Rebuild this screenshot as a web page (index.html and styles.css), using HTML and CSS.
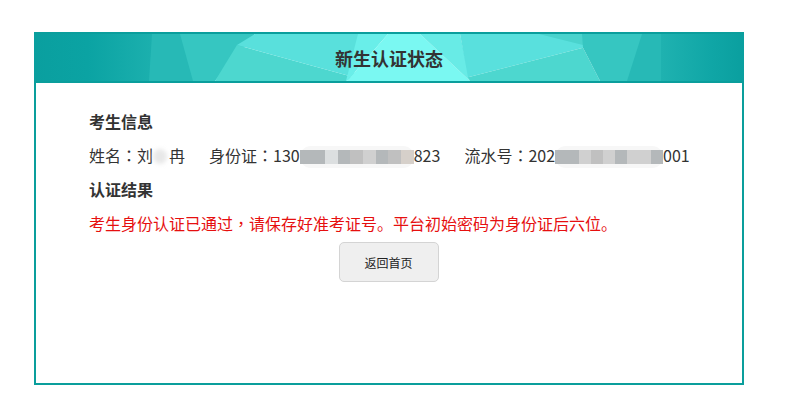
FILE: index.html
```html
<!DOCTYPE html>
<html lang="zh-CN">
<head>
<meta charset="utf-8">
<title>新生认证状态</title>
<link rel="stylesheet" href="styles.css">
</head>
<body>
<main class="card">
  <header class="banner">
    <svg class="banner-art" viewBox="0 0 710 51" preserveAspectRatio="none" aria-hidden="true">
      <defs>
        <linearGradient id="edgeL" x1="0" x2="1" y1="0" y2="0"><stop offset="0" stop-color="#0a9f9f"/><stop offset="0.45" stop-color="#0ba3a3"/><stop offset="1" stop-color="#1cb0ae"/></linearGradient>
        <linearGradient id="edgeR" x1="0" x2="1" y1="0" y2="0"><stop offset="0" stop-color="#1fb2b0"/><stop offset="0.6" stop-color="#10a6a6"/><stop offset="1" stop-color="#0a9f9f"/></linearGradient>
      </defs>
      <rect x="0" y="0" width="120" height="51" fill="url(#edgeL)"/>
      <polygon points="118,0 147,0 160,51 115,51" fill="#27b9b6"/>
      <polygon points="146,0 221,0 181,51 159,51" fill="#36c6c1"/>
      <polygon points="203,12 320,47 312,51 181,51" fill="#4dd7cf"/>
      <polygon points="221,0 325,0 320,47 203,12" fill="#59e0dc"/>
      <polygon points="324,0 354,0 313,51 312,51" fill="#69eee9"/>
      <polygon points="354,0 386,0 436,51 313,51" fill="#7af8f2"/>
      <polygon points="386,0 426,0 436,51" fill="#68ebe6"/>
      <polygon points="426,0 549,0 549,15 434,47" fill="#59e0dd"/>
      <polygon points="505,0 549,0 549,12" fill="#4ad3cd"/>
      <polygon points="434,47 549,15 566,51 436,51" fill="#4dd7cf"/>
      <polygon points="548,0 609,0 594,51 566,51 549,15" fill="#36c6c1"/>
      <polygon points="608,0 628,0 628,51 593,51" fill="#27b9b6"/>
      <rect x="627" y="0" width="83" height="51" fill="url(#edgeR)"/>
    </svg>
    <h1 class="banner-title">新生认证状态</h1>
  </header>
  <section class="content">
    <h2 class="section-title">考生信息</h2>
    <p class="info-row">
      <span class="field">姓名<span class="tc" lang="zh-TW">：</span>刘<span class="mask mask-name"><i class="blob"></i></span>冉</span>
      <span class="field">身份证<span class="tc" lang="zh-TW">：</span>130<span class="mask mask-id"><i class="px a"></i><i class="px a"></i><i class="px b"></i><i class="px a"></i><i class="px d"></i><i class="px c"></i><i class="px a"></i><i class="px d"></i><i class="px e"></i></span>823</span>
      <span class="field">流水号<span class="tc" lang="zh-TW">：</span>202<span class="mask mask-serial"><i class="px a"></i><i class="px a"></i><i class="px c"></i><i class="px d"></i><i class="px c"></i><i class="px a"></i><i class="px c"></i><i class="px c"></i><i class="px a"></i></span>001</span>
    </p>
    <h2 class="section-title">认证结果</h2>
    <p class="result">考生身份认证已通过<span class="tc" lang="zh-TW">，</span>请保存好准考证号。平台初始密码为身份证后六位。</p>
    <div class="actions"><a class="btn" href="#">返回首页</a></div>
  </section>
</main>
</body>
</html>
```

FILE: styles.css
```css
* { box-sizing: border-box; }
html, body { margin: 0; padding: 0; background: #fff; }
body {
  font-family: "Noto Sans CJK SC", "Liberation Sans", sans-serif;
  font-size: 16px;
  color: #333;
  padding: 32px 0 0 34px;
}
.tc { font-family: "Noto Sans CJK TC", sans-serif; }
.card {
  width: 710px;
  height: 353px;
  border: 2px solid #0a9e9c;
  display: flex;
  flex-direction: column;
}
.banner {
  position: relative;
  flex: none;
  margin: -2px -2px 0;
  height: 51px;
  border-top: 2px solid #0a9e9c;
  border-bottom: 2px solid #0a9e9c;
  display: flex;
  align-items: center;
  justify-content: center;
  overflow: hidden;
}
.banner-art { position: absolute; left: 0; top: 0; width: 100%; height: 100%; display: block; }
.banner-title {
  position: relative;
  margin: 0;
  font-size: 18px;
  font-weight: 700;
  color: #333;
  line-height: 1;
}
.content { padding: 21px 53px 0; }
.section-title {
  margin: 0;
  font-size: 16px;
  font-weight: 700;
  line-height: 34px;
  height: 34px;
  color: #333;
}
.info-row {
  margin: 0;
  height: 34px;
  line-height: 35px;
  white-space: nowrap;
  display: flex;
  gap: 24px;
}
.field { display: block; }
.mask {
  display: inline-flex;
  vertical-align: middle;
  height: 22px;
  align-items: center;
  margin-top: -2px;
  border-radius: 11px;
  background: #f7f7f7;
}
.mask-name { width: 16px; background: none; }
.blob { display: block; width: 14px; height: 15px; border-radius: 50%; background: #e8e8e8; filter: blur(2px); }
.mask-id { width: 114px; }
.mask-serial { width: 108px; }
.px { display: block; flex: 1; height: 14px; filter: blur(0.6px); }
.a { background: #b4b8ba; }
.b { background: #dcdfe0; }
.c { background: #d0d0d0; }
.d { background: #c0c0c0; }
.e { background: #d6d0ca; }
.result {
  margin: 0;
  line-height: 34px;
  height: 34px;
  color: #e60f0f;
  white-space: nowrap;
}
.actions { display: flex; justify-content: center; padding-top: 2px; margin-left: -1px; }
.btn {
  display: flex;
  align-items: center;
  justify-content: center;
  width: 100px;
  height: 40px;
  background: #efefef;
  border: 1px solid #d4d4d4;
  border-radius: 5px;
  font-size: 12px;
  color: #222;
  text-decoration: none;
}
```
